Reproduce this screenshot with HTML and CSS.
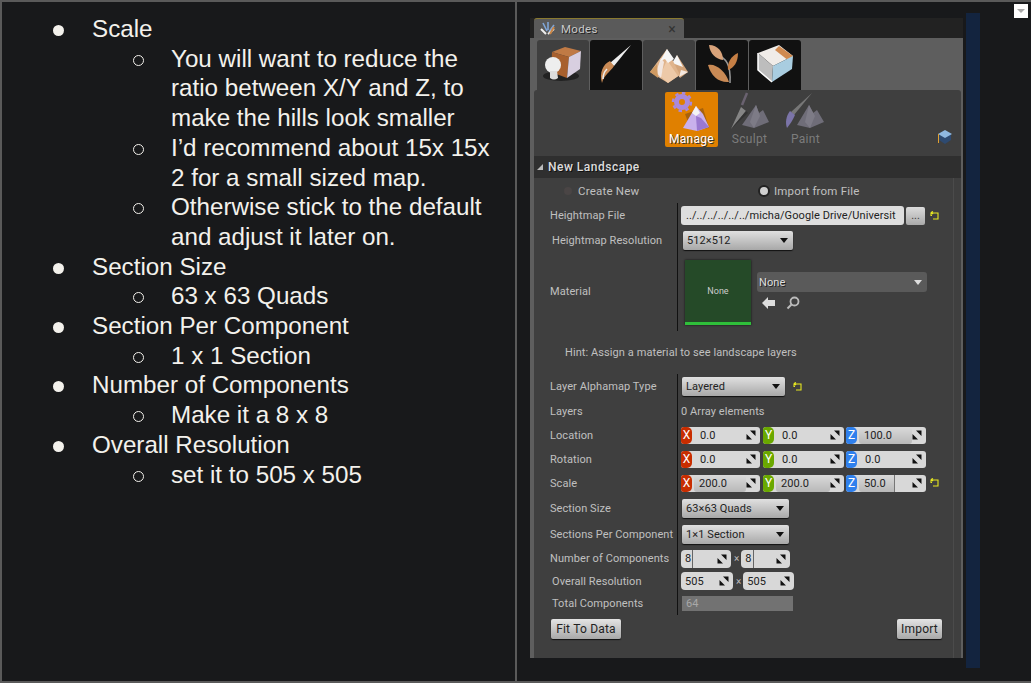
FILE: index.html
```html
<!DOCTYPE html>
<html>
<head>
    <title>Landscape Settings</title>
    <link rel="stylesheet" href="styles.css">
</head>
<body>
    <svg class="defs" width="0" height="0">
        <symbol id="spin" viewBox="0 0 10 10">
            <path d="M4 0.500H9.500V6Z M0.500 4L6 9.500H0.500Z" fill="#111"/>
        </symbol>
        <symbol id="reset" viewBox="0 0 10 10">
            <path d="M1 1.500V4.500H2 M1 1.500L3 0.500M1 1.500L3 3M2 2H8V8H3" fill="none" stroke="#e8e820" stroke-width="1.100"/>
        </symbol>
    </svg>

    <div class="screen">
        <!-- Slide notes -->
        <div class="notes">
            <ul class="list">
                <li>Scale
                    <ul>
                        <li>You will want to reduce the ratio between X/Y and Z, to make the hills look smaller</li>
                        <li>I’d recommend about 15x 15x 2 for a small sized map.</li>
                        <li>Otherwise stick to the default and adjust it later on.</li>
                    </ul>
                </li>
                <li>Section Size
                    <ul><li>63 x 63 Quads</li></ul>
                </li>
                <li>Section Per Component
                    <ul><li>1 x 1 Section</li></ul>
                </li>
                <li>Number of Components
                    <ul><li>Make it a 8 x 8</li></ul>
                </li>
                <li>Overall Resolution
                    <ul><li>set it to 505 x 505</li></ul>
                </li>
            </ul>
        </div>

        <!-- Screenshot side -->
        <div class="canvas">
            <div class="modes">
                <div class="title-band">
                    <div class="title-tab">
                        <svg width="16" height="14" viewBox="0 0 16 14">
                            <path d="M3 1L7 9M8 0L8 8M14 3L9 10" stroke="#7fa6d8" stroke-width="1.600" fill="none"/>
                            <path d="M1 7L6 12M14 7L8 12" stroke="#eee" stroke-width="2" fill="none"/>
                            <path d="M14 5L10 12" stroke="#c98545" stroke-width="2"/>
                        </svg>
                        <span>Modes</span>
                        <span class="close">×</span>
                    </div>
                </div>

                <div class="tool-tabs">
                    <div class="tool-tab active">
                        <svg width="52" height="50" viewBox="0 0 52 50">
                            <ellipse cx="24" cy="36" rx="18" ry="5" fill="#222"/>
                            <path d="M15 12L28 7L44 11L32 17Z" fill="#c07a45"/>
                            <path d="M15 12L32 17L30 38L14 32Z" fill="#a8602e"/>
                            <path d="M32 17L44 11L43 29L30 38Z" fill="#d8cfe0"/>
                            <circle cx="16" cy="25" r="8" fill="#eee"/>
                            <path d="M13 31H20L21 38Q17 41 13 38Z" fill="#ddd"/>
                        </svg>
                    </div>
                    <div class="tool-tab">
                        <svg width="52" height="50" viewBox="0 0 52 50">
                            <path d="M41 5L20 23L24 26Z" fill="#eee"/>
                            <path d="M20 21C13 24 9 33 12 43C14 35 20 32 24 26Z" fill="#c98a55"/>
                            <path d="M17 29C14 32 13 36 13 39" stroke="#eee" stroke-width="1.500" fill="none"/>
                        </svg>
                    </div>
                    <div class="tool-tab active">
                        <svg width="52" height="50" viewBox="0 0 52 50">
                            <path d="M34 15L30 26L37 38L45 32Z" fill="#d3a47a"/>
                            <path d="M34 15L29 23L40 27Z" fill="#f6f6f6"/>
                            <path d="M38 30L45 32L36 37Z" fill="#f4e8e0"/>
                            <path d="M24 9L7 32L25 43L37 35Z" fill="#e0b48c"/>
                            <path d="M24 20L17 36L25 43L35 36Z" fill="#edc9a8"/>
                            <path d="M18 18L13 32L18 38L21 22Z" fill="#f2e6e0"/>
                            <path d="M7 32L14 24L15 38Z" fill="#cf9a62"/>
                            <path d="M24 9L17 21L22 19L25 23L31 19Z" fill="#f6f6f6"/>
                        </svg>
                    </div>
                    <div class="tool-tab">
                        <svg width="52" height="50" viewBox="0 0 52 50">
                            <path d="M20 14C30 18 35 24 34 43" stroke="#999" stroke-width="1.500" fill="none"/>
                            <path d="M13 5C22 5 27 12 27 20C20 19 14 14 13 5Z" fill="#d9a37a"/>
                            <path d="M42 13C42 22 38 28 32 30C31 23 35 16 42 13Z" fill="#c67f45"/>
                            <path d="M12 25C20 23 30 32 33 42C23 43 15 36 12 25Z" fill="#c98a55"/>
                        </svg>
                    </div>
                    <div class="tool-tab">
                        <svg width="52" height="50" viewBox="0 0 52 50">
                            <path d="M9 13L30 5L44 16L24 26Z" fill="#f0ece8"/>
                            <path d="M30 6L44 16L40 21L26 10Z" fill="#d08a50"/>
                            <path d="M9 13L24 26L23 42L9 30Z" fill="#bdbdbd"/>
                            <path d="M24 26L44 16L43 29L23 42Z" fill="#a9cde0"/>
                            <path d="M9 13V30L23 42" stroke="#fff" stroke-width="1.500" fill="none"/>
                        </svg>
                    </div>
                </div>

                <div class="panel">
                    <div class="toolbar">
                        <div class="tool on">
                            <svg width="53" height="40" viewBox="0 0 53 40">
                                <path d="M20 22L38 16L44 36L26 38Z" fill="#a8620c"/>
                                <circle cx="17" cy="10" r="5.500" fill="none" stroke="#a989dc" stroke-width="5"/>
                                <circle cx="17" cy="10" r="9" fill="none" stroke="#a989dc" stroke-width="2.400" stroke-dasharray="3.500 3.500"/>
                                <path d="M31 14L18 36L32 39L44 35L38 22Z" fill="#c9b0ec"/>
                                <path d="M31 14L27 21L31 24L35 21Z" fill="#f4f4f4"/>
                                <path d="M31 24L32 39L44 35L36 26Z" fill="#9a78d0"/>
                            </svg>
                            <span>Manage</span>
                        </div>
                        <div class="tool">
                            <svg width="51" height="40" viewBox="0 0 51 40">
                                <path d="M23 1L18 13" stroke="#6a6270" stroke-width="2.500"/>
                                <path d="M17 15L22 19L7 37Z" fill="#858585"/>
                                <path d="M22 19L24 21L7 37Z" fill="#333"/>
                                <path d="M32 13L18 33L30 36L45 30L39 18L35 21Z" fill="#6f6d78"/>
                                <path d="M32 13L26 30L30 36L36 24Z" fill="#7d7b86"/>
                            </svg>
                            <span>Sculpt</span>
                        </div>
                        <div class="tool">
                            <svg width="51" height="40" viewBox="0 0 51 40">
                                <path d="M32 1L11 20L14 23Z" fill="#777"/>
                                <path d="M10 19C6 24 5 31 7 36C10 32 13 28 15 23Z" fill="#7b74a8"/>
                                <path d="M29 13L17 33L30 36L44 30L37 18L33 21Z" fill="#6f6d78"/>
                                <path d="M29 13L25 30L30 36L35 24Z" fill="#7d7b86"/>
                            </svg>
                            <span>Paint</span>
                        </div>
                        <svg class="cap" width="16" height="16" viewBox="0 0 16 16">
                            <path d="M8 7L14 5V11L8 15L2 11V6Z" fill="#2e4a70"/>
                            <path d="M8 1L15 5L8 9L1 5Z" fill="#8fb8e0"/>
                            <path d="M1.500 5V14" stroke="#e0a030" stroke-width="1"/>
                        </svg>
                    </div>

                    <div class="section-head"><span class="caret"></span>New Landscape</div>

                    <div class="details">
                        <div class="props">
                            <div class="radios">
                                <span class="radio-opt first"><i class="radio off"></i>Create New</span>
                                <span class="radio-opt"><i class="radio"></i>Import from File</span>
                            </div>

                            <div class="row r-25">
                                <div class="label">Heightmap File</div>
                                <div class="value">
                                    <div class="path-box">../../../../../../micha/Google Drive/Universit</div>
                                    <button class="dots">...</button>
                                    <svg class="reset" width="10" height="10"><use href="#reset"/></svg>
                                </div>
                            </div>
                            <div class="row r-24">
                                <div class="label shift">Heightmap Resolution</div>
                                <div class="value"><div class="combo w-110">512×512<i class="arrow"></i></div></div>
                            </div>
                            <div class="row r-79">
                                <div class="label">Material</div>
                                <div class="value material">
                                    <div class="thumb"><span>None</span></div>
                                    <div class="mat-side">
                                        <div class="mat-combo">None<i class="arrow light"></i></div>
                                        <div class="mat-icons">
                                            <svg width="14" height="12" viewBox="0 0 14 12"><path d="M0 6L6 0V3H13V9H6V12Z" fill="#ddd"/></svg>
                                            <svg width="14" height="14" viewBox="0 0 14 14"><circle cx="8.500" cy="5.500" r="4" fill="none" stroke="#bbb" stroke-width="1.800"/><path d="M5.500 8.500L1.500 12.500" stroke="#bbb" stroke-width="2"/></svg>
                                        </div>
                                    </div>
                                </div>
                            </div>

                            <div class="hint">Hint: Assign a material to see landscape layers</div>

                            <div class="row r-25">
                                <div class="label">Layer Alphamap Type</div>
                                <div class="value">
                                    <div class="combo w-103">Layered<i class="arrow"></i></div>
                                    <svg class="reset after-combo" width="10" height="10"><use href="#reset"/></svg>
                                </div>
                            </div>
                            <div class="row r-24">
                                <div class="label">Layers</div>
                                <div class="value">0 Array elements</div>
                            </div>
                            <div class="row r-24">
                                <div class="label">Location</div>
                                <div class="value vec">
                                    <div class="field x"><b>X</b><span class="num">0.0</span><svg width="10" height="10"><use href="#spin"/></svg></div>
                                    <div class="field y"><b>Y</b><span class="num">0.0</span><svg width="10" height="10"><use href="#spin"/></svg></div>
                                    <div class="field z"><b>Z</b><span class="num fill">100.0</span><svg width="10" height="10"><use href="#spin"/></svg></div>
                                </div>
                            </div>
                            <div class="row r-24">
                                <div class="label">Rotation</div>
                                <div class="value vec">
                                    <div class="field x"><b>X</b><span class="num">0.0</span><svg width="10" height="10"><use href="#spin"/></svg></div>
                                    <div class="field y"><b>Y</b><span class="num">0.0</span><svg width="10" height="10"><use href="#spin"/></svg></div>
                                    <div class="field z"><b>Z</b><span class="num">0.0</span><svg width="10" height="10"><use href="#spin"/></svg></div>
                                </div>
                            </div>
                            <div class="row r-24">
                                <div class="label">Scale</div>
                                <div class="value vec">
                                    <div class="field x"><b>X</b><span class="num fill">200.0</span><svg width="10" height="10"><use href="#spin"/></svg></div>
                                    <div class="field y"><b>Y</b><span class="num fill">200.0</span><svg width="10" height="10"><use href="#spin"/></svg></div>
                                    <div class="field z"><b>Z</b><span class="num part">50.0</span><svg width="10" height="10"><use href="#spin"/></svg></div>
                                    <svg class="reset" width="10" height="10"><use href="#reset"/></svg>
                                </div>
                            </div>
                            <div class="row r-26">
                                <div class="label">Section Size</div>
                                <div class="value"><div class="combo w-107">63×63 Quads<i class="arrow"></i></div></div>
                            </div>
                            <div class="row r-26">
                                <div class="label">Sections Per Component</div>
                                <div class="value"><div class="combo w-107">1×1 Section<i class="arrow"></i></div></div>
                            </div>
                            <div class="row r-23">
                                <div class="label">Number of Components</div>
                                <div class="value pair">
                                    <div class="small w-50"><span class="tick">8</span><svg width="10" height="10"><use href="#spin"/></svg></div>
                                    <span class="times">×</span>
                                    <div class="small w-49"><span class="tick">8</span><svg width="10" height="10"><use href="#spin"/></svg></div>
                                </div>
                            </div>
                            <div class="row r-22">
                                <div class="label shift">Overall Resolution</div>
                                <div class="value pair">
                                    <div class="small w-52"><span>505</span><svg width="10" height="10"><use href="#spin"/></svg></div>
                                    <span class="times">×</span>
                                    <div class="small w-51"><span>505</span><svg width="10" height="10"><use href="#spin"/></svg></div>
                                </div>
                            </div>
                            <div class="row r-23">
                                <div class="label shift">Total Components</div>
                                <div class="value"><div class="readonly">64</div></div>
                            </div>
                        </div>

                        <div class="actions">
                            <button class="btn btn-fit">Fit To Data</button>
                            <button class="btn btn-import">Import</button>
                        </div>
                    </div>
                </div>
            </div>
            <div class="blue-bar"></div>
        </div>

        <div class="corner"><i></i></div>
    </div>
</body>
</html>
```

FILE: styles.css
```css
* {
    box-sizing: border-box;
}
body {
    margin: 0;
    background-color: #18191b;
}
.defs {
    position: absolute;
}
.screen {
    display: grid;
    grid-template-columns: 515px 1fr;
    width: 1031px;
    height: 683px;
    border-top: 2px solid #5a5a5a;
    border-bottom: 2px solid #5a5a5a;
    border-left: 2px solid #5a5a5a;
    position: relative;
    overflow: hidden;
}

/* Left side */
.notes {
    margin-left: -2px;
    border-right: 2px solid #5a5a5a;
    padding: 12px 20px 0 92px;
    color: #f3f1ec;
    font-family: "Liberation Sans", Arial, sans-serif;
    font-size: 24.200px;
    line-height: 29.700px;
}
.list, .list ul {
    list-style: none;
    margin: 0;
    padding: 0;
}
.list ul {
    padding-left: 79px;
}
.list > li::before {
    content: "";
    display: inline-block;
    width: 11px;
    height: 11px;
    margin-left: -39px;
    margin-right: 28px;
    vertical-align: 1px;
    border-radius: 50%;
    background-color: #f3f1ec;
}
.list ul li::before {
    content: "";
    display: inline-block;
    box-sizing: border-box;
    width: 11px;
    height: 11px;
    margin-left: -38px;
    margin-right: 27px;
    vertical-align: 1px;
    border-radius: 50%;
    border: 1.500px solid #f3f1ec;
}

/* Right side */
.canvas {
    display: flex;
    align-items: flex-start;
    margin-left: -2px;
    padding-left: 15px;
}
.modes {
    width: 433px;
    height: 640px;
    margin-top: 16px;
    display: flex;
    flex-direction: column;
    background-color: #5e5e5e;
    font-family: Roboto, "Liberation Sans", sans-serif;
    font-size: 11px;
    letter-spacing: 0.080px;
    color: #c0c0c0;
}
.blue-bar {
    width: 14px;
    height: 655px;
    margin-top: 11px;
    margin-left: 3px;
    background-color: #13243f;
}
.corner {
    position: absolute;
    top: 2px;
    right: 3px;
    width: 14px;
    height: 14px;
    background-color: #fff;
    display: flex;
    align-items: center;
    justify-content: center;
}
.corner i {
    border-top: 4px solid #aaa;
    border-left: 4px solid transparent;
    border-right: 4px solid transparent;
}

.title-band {
    height: 20px;
    padding-left: 4px;
    background-color: #222;
}
.title-tab {
    width: 150px;
    height: 20px;
    padding: 0 8px 0 6px;
    display: flex;
    align-items: center;
    gap: 5px;
    background-color: #5a5a5a;
    border-top: 1px solid #8a7a30;
    border-radius: 3px 3px 0 0;
    color: #c8c8c8;
    font-size: 11.500px;
    letter-spacing: 0.300px;
    text-shadow: 1px 1px 0 #222;
}
.close {
    margin-left: auto;
    color: #333;
    font-size: 14px;
    text-shadow: none;
}

.tool-tabs {
    display: flex;
    gap: 1px;
    height: 52px;
    padding: 2px 0 0 7px;
    flex-shrink: 0;
}
.tool-tab {
    width: 52px;
    height: 50px;
    background-color: #111;
    border-radius: 3px 3px 0 0;
}
.tool-tab.active {
    background-color: #3f3f3f;
}
.tool-tab svg {
    display: block;
}

.panel {
    flex: 1;
    margin: 0 2px 0 4px;
    background-color: #3f3f3f;
    border-radius: 3px 3px 0 0;
    display: flex;
    flex-direction: column;
}

.toolbar {
    height: 66px;
    display: flex;
    padding: 2px 0 0 131px;
    position: relative;
    flex-shrink: 0;
}
.tool {
    width: 51px;
    height: 55px;
    margin-right: 5px;
    display: flex;
    flex-direction: column;
    align-items: center;
    color: #7c7c7c;
    font-size: 12px;
    letter-spacing: 0.300px;
    border-radius: 2px;
}
.tool svg {
    flex-shrink: 0;
}
.tool span {
    line-height: 14px;
}
.tool.on {
    width: 53px;
    margin-right: 6px;
    background-color: #e08000;
    color: #fff;
    text-shadow: 1px 1px 0 #333;
}
.cap {
    position: absolute;
    right: 8px;
    bottom: 11px;
}

.section-head {
    height: 22px;
    display: flex;
    align-items: center;
    padding-left: 3px;
    background-color: #2f2f2f;
    color: #dcdcdc;
    font-weight: 500;
    font-size: 12px;
    letter-spacing: 0.500px;
    text-shadow: 1px 1px 0 #111;
}
.caret {
    width: 0;
    height: 0;
    margin-right: 5px;
    border-bottom: 6px solid #bbb;
    border-left: 6px solid transparent;
}

.details {
    flex: 1;
    margin-right: 7px;
    border-right: 1px solid #4b4b4b;
}
.radios {
    height: 25px;
    display: flex;
    align-items: center;
    padding-left: 30px;
    font-size: 11.500px;
    letter-spacing: 0.200px;
}
.radio-opt {
    display: flex;
    align-items: center;
    gap: 4px;
}
.radio-opt.first {
    gap: 6px;
    width: 194px;
}
.radio {
    width: 12px;
    height: 12px;
    border-radius: 50%;
    background-color: #d0d0d0;
    border: 2px solid #222;
}
.radio.off {
    background-color: #4a4545;
    border: none;
    width: 8px;
    height: 8px;
}

.row {
    display: grid;
    grid-template-columns: 143px 1fr;
}
.r-22 { height: 22px; }
.r-23 { height: 23px; }
.r-24 { height: 24px; }
.r-25 { height: 25px; }
.r-26 { height: 26px; }
.r-79 { height: 79px; }

.label {
    display: flex;
    align-items: center;
    padding-left: 16px;
    white-space: nowrap;
}
.label.shift {
    padding-left: 18px;
}
.value {
    display: flex;
    align-items: center;
    border-left: 1px solid #111;
    padding-left: 3px;
}

.path-box {
    width: 223px;
    height: 19px;
    line-height: 19px;
    padding-left: 5px;
    background-color: #dedede;
    border-radius: 3px;
    color: #222;
    white-space: nowrap;
    overflow: hidden;
}
.dots {
    width: 19px;
    height: 18px;
    margin-left: 2px;
    padding: 0;
    border: none;
    border-radius: 2px;
    background: linear-gradient(#dcdcdc, #aaa);
    color: #333;
    font-size: 10px;
}
.reset {
    margin-left: 5px;
}
.vec .reset {
    margin-left: 1px;
}
.reset.after-combo {
    margin-left: 8px;
}

.combo {
    height: 19px;
    padding: 0 5px 0 4px;
    display: flex;
    align-items: center;
    justify-content: space-between;
    background: linear-gradient(#e0e0e0, #a8a8a8);
    border-radius: 2px;
    box-shadow: 0 1px 1px #111;
    color: #222;
    margin-left: 1px;
}
.w-110 { width: 110px; margin-left: 2px; }
.w-107 { width: 107px; }
.w-103 { width: 103px; }
.arrow {
    border-top: 5px solid #111;
    border-left: 4px solid transparent;
    border-right: 4px solid transparent;
}
.arrow.light {
    border-top-color: #ddd;
}

.material {
    padding-left: 7px;
    gap: 6px;
}
.thumb {
    width: 66px;
    height: 65px;
    margin-top: 1px;
    display: flex;
    align-items: center;
    justify-content: center;
    background-color: #254a28;
    border-bottom: 3px solid #2fc03a;
    box-shadow: 0 0 2px #111;
    color: #ccc;
    font-size: 9px;
    letter-spacing: 0;
}
.mat-side {
    margin-top: -1px;
}
.mat-combo {
    width: 170px;
    height: 20px;
    padding: 0 5px 0 2px;
    display: flex;
    align-items: center;
    justify-content: space-between;
    background-color: #5a5a5a;
    border-radius: 3px;
    color: #ddd;
    text-shadow: 1px 1px 0 #222;
}
.mat-icons {
    display: flex;
    align-items: center;
    gap: 10px;
    padding: 4px 0 0 5px;
}

.hint {
    height: 43px;
    display: flex;
    align-items: center;
    padding-left: 31px;
}

.vec {
    gap: 3px;
}
.field {
    width: 79px;
    height: 17px;
    display: flex;
    align-items: center;
    background-color: #d8d8d8;
    border-radius: 3px;
    color: #222;
    overflow: hidden;
}
.field.y {
    width: 81px;
}
.field.z {
    width: 80px;
    margin-left: -1px;
}
.field b {
    width: 11px;
    height: 17px;
    line-height: 17px;
    text-align: center;
    color: #fff;
    font-weight: 400;
    font-size: 12px;
    letter-spacing: 0;
    border-radius: 0 5px 5px 0;
}
.field.x b { background-color: #c82d00; }
.field.y b { background-color: #6aa800; }
.field.z b { background-color: #2f80ed; }
.num {
    flex: 1;
    height: 17px;
    line-height: 17px;
    padding-left: 8px;
}
.num.fill {
    background: linear-gradient(#dadada, #b8b8b8);
    border-radius: 3px;
    margin-left: 2px;
    padding-left: 5px;
}
.num.part {
    flex: 0 0 36px;
    margin-left: 2px;
    margin-right: auto;
    padding-left: 5px;
    background: linear-gradient(#dadada, #b8b8b8);
    border-right: 1px solid #777;
    border-radius: 3px 0 0 3px;
}
.field svg, .small svg {
    margin-right: 4px;
    flex-shrink: 0;
}

.pair {
    gap: 3px;
}
.small {
    height: 18px;
    display: flex;
    align-items: center;
    justify-content: space-between;
    padding-left: 4px;
    background-color: #d8d8d8;
    border-radius: 4px;
    color: #222;
}
.w-52 { width: 52px; }
.w-51 { width: 51px; }
.w-50 { width: 50px; }
.w-49 { width: 49px; }
.tick {
    border-right: 1px solid #666;
    padding-right: 1px;
    line-height: 18px;
}
.times {
    color: #bbb;
    font-size: 10px;
    letter-spacing: 0;
    margin-right: -1px;
}
.readonly {
    width: 111px;
    height: 15px;
    line-height: 15px;
    margin-left: 1px;
    padding-left: 4px;
    background-color: #727272;
    color: #a8a8a8;
}

.actions {
    display: flex;
    justify-content: space-between;
    padding: 4px 11px 0 17px;
}
.btn {
    height: 20px;
    padding: 0;
    border: none;
    border-radius: 2px;
    background: linear-gradient(#e4e4e4, #a8a8a8);
    box-shadow: 0 1px 1px #111;
    color: #222;
    font-family: Roboto, "Liberation Sans", sans-serif;
    font-size: 12px;
    letter-spacing: 0.200px;
}
.btn-fit {
    width: 70px;
}
.btn-import {
    width: 45px;
}
```
